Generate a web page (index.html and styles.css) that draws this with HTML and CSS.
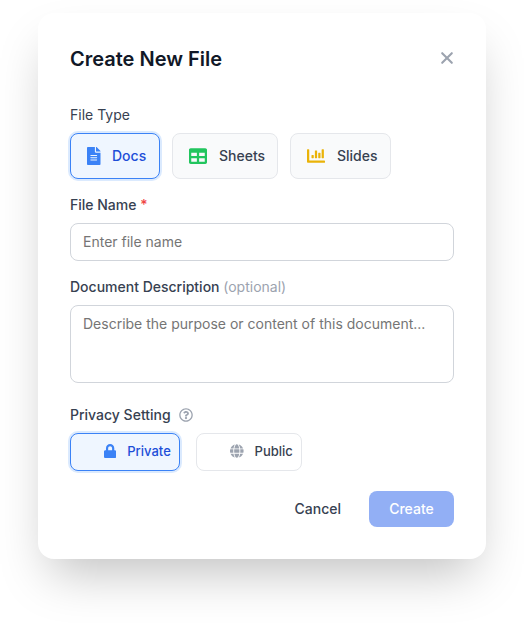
FILE: index.html
```html
<!DOCTYPE html>
<html lang="en">
<head>
<meta charset="utf-8">
<title>Create New File</title>
<link rel="stylesheet" href="styles.css">
</head>
<body>
<main class="dialog">
  <header class="header">
    <h1 class="title">Create New File</h1>
    <button class="close" aria-label="Close"><svg width="14" height="14" viewBox="0 0 14 14"><path d="M2.2 2.2l9.6 9.6M11.8 2.2L2.2 11.8" fill="none" stroke="currentColor" stroke-width="2.1" stroke-linecap="round"/></svg></button>
  </header>

  <div class="label label-type">File Type</div>
  <div class="types">
    <button class="option docs selected">
      <svg class="icon" width="13.5" height="18" viewBox="0 0 384 512"><path d="M224 136V0H24C10.7 0 0 10.7 0 24v464c0 13.3 10.7 24 24 24h336c13.3 0 24-10.7 24-24V160H248c-13.2 0-24-10.8-24-24zm64 236c0 6.6-5.4 12-12 12H108c-6.6 0-12-5.4-12-12v-8c0-6.6 5.4-12 12-12h168c6.6 0 12 5.4 12 12v8zm0-64c0 6.6-5.4 12-12 12H108c-6.6 0-12-5.4-12-12v-8c0-6.6 5.4-12 12-12h168c6.6 0 12 5.4 12 12v8zm0-72v8c0 6.6-5.4 12-12 12H108c-6.6 0-12-5.4-12-12v-8c0-6.6 5.4-12 12-12h168c6.6 0 12 5.4 12 12zm96-114.1v6.1H256V0h6.1c6.4 0 12.5 2.5 17 7l97.9 98c4.5 4.5 7 10.6 7 16.9z"/></svg>
      <span>Docs</span>
    </button>
    <button class="option sheets">
      <svg class="icon" width="18" height="18" viewBox="0 0 512 512"><path d="M464 32H48C21.49 32 0 53.49 0 80v352c0 26.51 21.49 48 48 48h416c26.51 0 48-21.49 48-48V80c0-26.51-21.49-48-48-48zM224 416H64v-96h160v96zm0-160H64v-96h160v96zm224 160H288v-96h160v96zm0-160H288v-96h160v96z"/></svg>
      <span>Sheets</span>
    </button>
    <button class="option slides">
      <svg class="icon" width="18" height="18" viewBox="0 0 512 512"><path d="M332.8 320h38.4c6.4 0 12.8-6.4 12.8-12.8V172.8c0-6.4-6.4-12.8-12.8-12.8h-38.4c-6.4 0-12.8 6.4-12.8 12.8v134.4c0 6.4 6.4 12.8 12.8 12.8zm96 0h38.4c6.4 0 12.8-6.4 12.8-12.8V76.8c0-6.4-6.4-12.8-12.8-12.8h-38.4c-6.4 0-12.8 6.4-12.8 12.8v230.4c0 6.4 6.4 12.8 12.8 12.8zm-288 0h38.4c6.4 0 12.8-6.4 12.8-12.8v-70.4c0-6.4-6.4-12.8-12.8-12.8h-38.4c-6.4 0-12.8 6.4-12.8 12.8v70.4c0 6.4 6.4 12.8 12.8 12.8zm96 0h38.4c6.4 0 12.8-6.4 12.8-12.8V108.8c0-6.4-6.4-12.8-12.8-12.8h-38.4c-6.4 0-12.8 6.4-12.8 12.8v198.4c0 6.4 6.4 12.8 12.8 12.8zM496 384H64V80c0-8.84-7.16-16-16-16H16C7.16 64 0 71.16 0 80v336c0 17.67 14.33 32 32 32h464c8.84 0 16-7.16 16-16v-32c0-8.84-7.16-16-16-16z"/></svg>
      <span>Slides</span>
    </button>
  </div>

  <label class="label label-name" for="name">File Name <span class="required">*</span></label>
  <input class="field input" id="name" type="text" placeholder="Enter file name">

  <label class="label label-desc" for="desc">Document Description <span class="optional">(optional)</span></label>
  <textarea class="field textarea" id="desc" placeholder="Describe the purpose or content of this document..."></textarea>

  <div class="label label-privacy">Privacy Setting
    <svg class="help" width="14" height="14" viewBox="0 0 512 512"><path d="M256 8C119.043 8 8 119.083 8 256c0 136.997 111.043 248 248 248s248-111.003 248-248C504 119.083 392.957 8 256 8zm0 448c-110.532 0-200-89.431-200-200 0-110.495 89.472-200 200-200 110.491 0 200 89.471 200 200 0 110.53-89.431 200-200 200zm107.244-255.2c0 67.052-72.421 68.084-72.421 92.863V300c0 6.627-5.373 12-12 12h-45.647c-6.627 0-12-5.373-12-12v-8.659c0-35.745 27.1-50.034 47.579-61.516 17.561-9.845 28.324-16.541 28.324-29.579 0-17.246-21.999-28.693-39.784-28.693-23.189 0-33.894 10.977-48.942 29.969-4.057 5.12-11.46 6.071-16.666 2.124l-27.824-21.098c-5.107-3.872-6.251-11.066-2.644-16.363C184.846 131.491 214.94 112 261.794 112c49.071 0 101.45 38.304 101.45 88.8zM298 368c0 23.159-18.841 42-42 42s-42-18.841-42-42 18.841-42 42-42 42 18.841 42 42z"/></svg>
  </div>
  <div class="privacy">
    <button class="option private selected">
      <svg class="icon" width="12.25" height="14" viewBox="0 0 448 512"><path d="M400 224h-24v-72C376 68.2 307.8 0 224 0S72 68.2 72 152v72H48c-26.5 0-48 21.5-48 48v192c0 26.5 21.5 48 48 48h352c26.5 0 48-21.5 48-48V272c0-26.5-21.5-48-48-48zm-104 0H152v-72c0-39.7 32.3-72 72-72s72 32.3 72 72v72z"/></svg>
      <span>Private</span>
    </button>
    <button class="option public">
      <svg class="icon" width="13.6" height="14" viewBox="0 0 496 512"><path d="M336.5 160C322 70.7 287.8 8 248 8s-74 62.7-88.5 152h177zM152 256c0 22.2 1.2 43.5 3.3 64h185.3c2.1-20.5 3.3-41.8 3.3-64s-1.2-43.5-3.3-64H155.3c-2.1 20.5-3.3 41.8-3.3 64zm324.7-96c-28.6-67.9-86.5-120.4-158-141.6 24.4 33.8 41.2 84.7 50 141.6h108zM177.2 18.4C105.8 39.6 47.8 92.1 19.3 160h108c8.7-56.9 25.5-107.8 49.9-141.6zM487.4 192H372.7c2.1 21 3.3 42.5 3.3 64s-1.2 43-3.3 64h114.6c5.5-20.5 8.6-41.8 8.6-64s-3.1-43.5-8.5-64zM120 256c0-21.5 1.2-43 3.3-64H8.6C3.2 212.5 0 233.8 0 256s3.2 43.5 8.6 64h114.6c-2-21-3.2-42.5-3.2-64zm39.5 96c14.5 89.3 48.7 152 88.5 152s74-62.7 88.5-152h-177zm159.3 141.6c71.4-21.2 129.4-73.7 158-141.6h-108c-8.8 56.9-25.6 107.8-50 141.6zM19.3 352c28.6 67.9 86.5 120.4 158 141.6-24.4-33.8-41.2-84.7-50-141.6h-108z"/></svg>
      <span>Public</span>
    </button>
  </div>

  <footer class="footer">
    <button class="cancel">Cancel</button>
    <button class="create">Create</button>
  </footer>
</main>
</body>
</html>
```
FILE: styles.css
```css
* { box-sizing: border-box; }

body {
  margin: 0;
  height: 623px;
  padding: 13px 38px 0;
  overflow: hidden;
  background: #fff;
  font: 400 14px/20px Inter, sans-serif;
  color: #374151;
}

button, input, textarea {
  margin: 0;
  font: inherit;
  letter-spacing: inherit;
  color: inherit;
}

button { border: 0; padding: 0; background: none; white-space: nowrap; }
svg { display: block; flex: none; fill: currentColor; }

.dialog {
  width: 448px;
  height: 546px;
  padding: 32px;
  border-radius: 16px;
  background: #fff;
  box-shadow: 0 25px 50px -12px rgba(0, 0, 0, .25);
  display: flex;
  flex-direction: column;
}

.header { display: flex; justify-content: space-between; align-items: center; height: 28px; }
.title { margin: 0; font-size: 20px; line-height: 28px; font-weight: 600; color: #111827; }
.close { padding-bottom: 2px; color: #9ca3af; }

.label { font-weight: 500; height: 20px; }
.label-type { margin-top: 32px; font-weight: 400; }
.types { display: flex; gap: 12px; margin-top: 8px; }

.option {
  display: flex;
  align-items: center;
  gap: 12px;
  border: 1px solid #e5e7eb;
  border-radius: 8px;
  background: #f9fafb;
  font-weight: 500;
}
.types .option { height: 46px; padding-left: 16px; }
.types .docs { width: 90px; gap: 11.5px; }
.sheets { width: 106px; }
.slides { width: 101px; }
.sheets .icon { color: #22c55e; }
.slides .icon { color: #eab308; }

.option.selected {
  border-color: #3b82f6;
  background: #eff6ff;
  color: #1d4ed8;
  box-shadow: 0 0 0 2px #dbeafe;
}
.option.selected .icon { color: #3b82f6; }

.label-name { margin-top: 16px; }
.required { color: #ef4444; }
.optional { color: #9ca3af; font-weight: 400; }

.field {
  display: block;
  width: 384px;
  border: 1px solid #d1d5db;
  border-radius: 8px;
  background: #fff;
  outline: 0;
  resize: none;
}
.field::placeholder { color: #757575; opacity: 1; }
.input { height: 38px; margin-top: 8px; padding: 0 12px 1px; }
.label-desc { margin-top: 16px; }
.textarea { height: 78px; margin-top: 8px; padding: 8px 12px; overflow: hidden; }

.label-privacy { display: flex; align-items: center; gap: 8px; margin-top: 22px; }
.help { color: #9ca3af; }

.privacy { display: flex; gap: 16px; margin-top: 8px; }
.privacy .option { height: 38px; padding: 0 0 2px 33px; gap: 11px; font-size: 13px; }
.private { width: 110px; }
.public { width: 106px; }
.privacy .public { background: #fff; }
.public .icon { color: #9ca3af; }

.footer { display: flex; justify-content: flex-end; gap: 28px; margin-top: 20px; height: 36px; }
.cancel, .create { font-weight: 500; }
.create { width: 85px; border-radius: 8px; background: #92aff5; color: #fff; }
```
